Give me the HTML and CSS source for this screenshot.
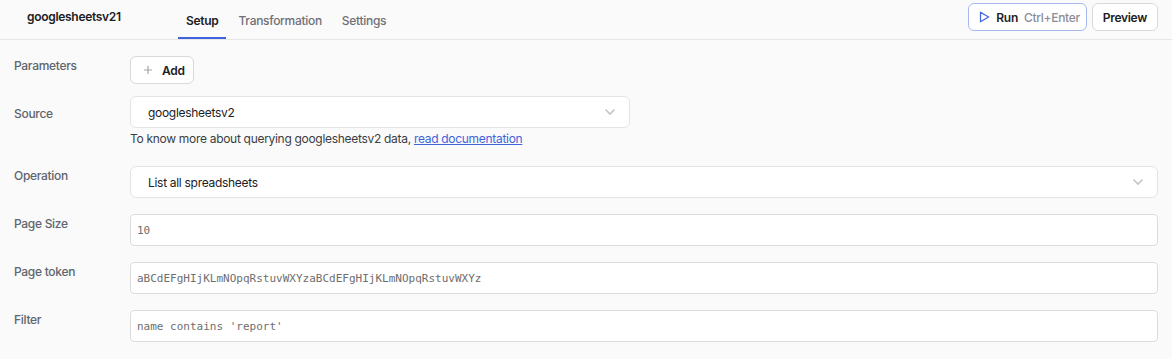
FILE: index.html
```html
<!DOCTYPE html>
<html lang="en">
<head>
  <meta charset="UTF-8" />
  <title>googlesheetsv21</title>
  <link rel="stylesheet" href="styles.css">
</head>
<body>
  <div class="topbar">
    <div class="query-name">googlesheetsv21</div>
    <nav class="tabs">
      <span class="tab active">Setup</span>
      <span class="tab">Transformation</span>
      <span class="tab">Settings</span>
    </nav>
    <div class="actions">
      <button class="btn btn-run">
        <svg width="11" height="12" viewBox="0 0 11 12"><path d="M1.5 1.2 L9.6 6 L1.5 10.8 Z" fill="none" stroke="#3e63dd" stroke-width="1.2" stroke-linejoin="round"/></svg>
        <span class="run-label">Run</span>
        <span class="shortcut">Ctrl+Enter</span>
      </button>
      <button class="btn">Preview</button>
    </div>
  </div>

  <div class="form">
    <div class="row row-params">
      <label class="field-label">Parameters</label>
      <div>
        <button class="btn btn-add">
          <svg class="plus" width="10" height="10" viewBox="0 0 10 10"><path d="M5 1 V9 M1 5 H9" stroke="#a6a6a6" stroke-width="1.2"/></svg>
          Add
        </button>
      </div>
    </div>

    <div class="row row-source">
      <label class="field-label center">Source</label>
      <div>
        <div class="select select-short">
          <span>googlesheetsv2</span>
          <svg class="chevron" width="12" height="8" viewBox="0 0 12 8"><path d="M1.5 1.5 L6 6 L10.5 1.5" fill="none" stroke="#c4c4c4" stroke-width="1.6"/></svg>
        </div>
        <p class="help">To know more about querying googlesheetsv2 data, <a href="#">read documentation</a></p>
      </div>
    </div>

    <div class="row">
      <label class="field-label">Operation</label>
      <div class="select">
        <span>List all spreadsheets</span>
        <svg class="chevron" width="12" height="8" viewBox="0 0 12 8"><path d="M1.5 1.5 L6 6 L10.5 1.5" fill="none" stroke="#c4c4c4" stroke-width="1.6"/></svg>
      </div>
    </div>

    <div class="row">
      <label class="field-label">Page Size</label>
      <div class="code-input">10</div>
    </div>

    <div class="row">
      <label class="field-label">Page token</label>
      <div class="code-input">aBCdEFgHIjKLmNOpqRstuvWXYzaBCdEFgHIjKLmNOpqRstuvWXYz</div>
    </div>

    <div class="row">
      <label class="field-label">Filter</label>
      <div class="code-input">name contains 'report'</div>
    </div>
  </div>
</body>
</html>
```

FILE: styles.css
```css
* { box-sizing: border-box; }

body {
  margin: 0;
  font-family: 'Inter', sans-serif;
  font-size: 12px;
  letter-spacing: -0.3px;
  color: #1c2024;
  background: #fafafa;
}

/* barra de cima */
.topbar {
  display: flex;
  align-items: flex-start;
  height: 40px;
  border-bottom: 1px solid #e6e6e6;
  padding-right: 14px;
}

.query-name {
  width: 178px;
  padding-left: 27px;
  padding-top: 9px;
  line-height: 16px;
  font-weight: 600;
}

.tabs {
  display: flex;
  gap: 4px;
  height: 39px;
}

.tab {
  padding: 13px 8px 0;
  line-height: 16px;
  color: #6f6f77;
  font-weight: 500;
  border-bottom: 2px solid transparent;
}

.tab.active {
  color: #1c2024;
  font-weight: 600;
  border-bottom-color: #3e63dd;
}

.actions {
  margin-left: auto;
  margin-top: 3px;
  display: flex;
  gap: 5px;
}

.btn {
  font-family: inherit;
  font-size: 12px;
  letter-spacing: -0.3px;
  font-weight: 600;
  color: #1c2024;
  background: #fff;
  height: 28px;
  padding: 0 10px;
  border: 1px solid #d9d9d9;
  border-radius: 6px;
  display: flex;
  align-items: center;
  gap: 7px;
}

.btn-run {
  border-color: #a8b9ee;
  padding: 0 6px 0 10px;
  gap: 6px;
}

.shortcut {
  color: #8b8d98;
  font-weight: 500;
}

/* formulario */
.form {
  padding: 16px 14px;
}

.row {
  display: grid;
  grid-template-columns: 116px 1fr;
  margin-bottom: 16px;
}

.row-params { margin-bottom: 12px; }
.row-source { margin-bottom: 19px; }

.field-label {
  line-height: 20px;
  color: #60646c;
  font-weight: 500;
}

.field-label.center {
  align-self: start;
  margin-top: 8px;
}

.btn-add {
  height: 28px;
  width: 64px;
  padding: 0 12px;
  gap: 9px;
  font-weight: 600;
}

.plus { flex-shrink: 0; }

.select {
  height: 32px;
  background: #fff;
  border: 1px solid #e3e3e3;
  border-radius: 6px;
  display: flex;
  align-items: center;
  justify-content: space-between;
  padding: 0 13px 0 17px;
}

.select-short { width: 500px; }

.help {
  margin: 3px 0 0;
  line-height: 16px;
  color: #3a3d42;
}

.help a {
  color: #3e63dd;
}

.code-input {
  height: 32px;
  background: #fff;
  border: 1px solid #dcdcdc;
  border-radius: 4px;
  padding: 0 6px;
  display: flex;
  align-items: center;
  font-family: 'DejaVu Sans Mono', monospace;
  font-size: 11px;
  letter-spacing: 0;
  color: #6e6e6e;
}
```
